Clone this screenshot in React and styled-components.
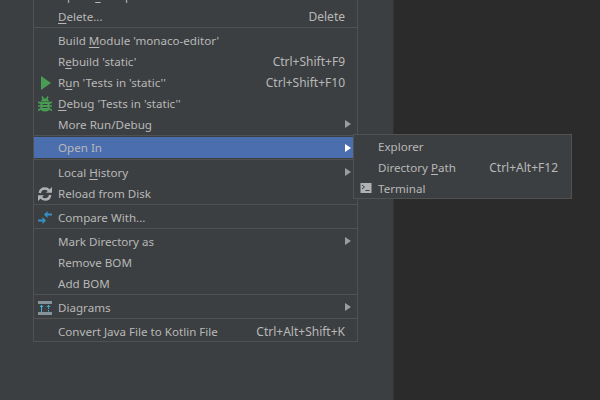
import styled, { createGlobalStyle } from "styled-components";

const GlobalStyle = createGlobalStyle`
  html, body {
    margin: 0;
    padding: 0;
    overflow: hidden;
    background: #3c3f41;
  }
`;

const Page = styled.div`
  display: flex;
  width: 600px;
  height: 400px;
  overflow: hidden;
  font-family: "Noto Sans", "Liberation Sans", sans-serif;
  font-size: 11.6px;
  color: #b8b8b8;
`;

const Side = styled.div`
  width: 393px;
  flex: none;
  background: #3c3f41;
`;

const Editor = styled.div`
  flex: 1;
  background: #2b2b2b;
  border-left: 1px solid #323232;
`;

const Menu = styled.div`
  width: 323px;
  margin: -16px 0 0 33px;
  background: #3c3f41;
  border: 1px solid #515151;
`;

const Row = styled.div`
  position: relative;
  display: flex;
  align-items: center;
  height: ${({ $last }) => ($last ? 20 : 21)}px;
  padding: 0 6px 0 4px;
  white-space: nowrap;
  background: ${({ $active }) => ($active ? "#4b6eaf" : "transparent")};
`;

const IconSlot = styled.span`
  display: flex;
  align-items: center;
  flex: none;
  width: 20px;
  height: 16px;
`;

const Label = styled.span`
  margin-top: ${({ $lift }) => ($lift ? 2 : 1)}px;
  line-height: 16px;
`;

const Mnemonic = styled.u`
  text-underline-offset: 2px;
`;

const Shortcut = styled.span`
  margin: ${({ $lift }) => ($lift ? 2 : 1)}px 6px 0 auto;
  font-size: 12px;
  line-height: 16px;
`;

const Arrow = styled.span`
  margin: 0 0 ${({ $active }) => ($active ? 0 : 2)}px auto;
  width: 0;
  height: 0;
  border-style: solid;
  border-width: 4.5px 0 4.5px 6px;
  border-color: transparent transparent transparent ${({ $active }) => ($active ? "#ffffff" : "#9a9c9e")};
`;

const Separator = styled.div`
  height: 1px;
  margin-top: ${({ $before }) => $before || 0}px;
  margin-bottom: ${({ $after }) => ($after === undefined ? 2 : $after)}px;
  background: #515151;
`;

const SubMenu = styled.div`
  position: absolute;
  left: 319px;
  top: -3px;
  width: 217px;
  padding-top: 1px;
  background: #3c3f41;
  border: 1px solid #515151;
`;

const SubRow = styled(Row)`
  padding: 0 7px 0 6px;
`;

const SubIconSlot = styled(IconSlot)`
  width: 18px;
`;

const RunIcon = () => (
  <svg width="14" height="16" viewBox="0 0 14 16">
    <path d="M3 1 L13 8 L3 15 Z" fill="#499c54" />
  </svg>
);

const BugIcon = () => (
  <svg width="14" height="16" viewBox="0 0 14 16">
    <g stroke="#499c54" strokeWidth="1.6" fill="none">
      <path d="M0 6 L3 7.5 M0 10 H3 M0 14.5 L3 12.5 M14 6 L11 7.5 M14 10 H11 M14 14.5 L11 12.5" />
      <path d="M4 0.5 L5.5 3 M10 0.5 L8.5 3" />
    </g>
    <path d="M4.5 2.5 H9.5 L11 5 H3 Z" fill="#499c54" />
    <path d="M2.5 5.5 H11.5 V12 Q11.5 15.5 7 15.5 Q2.5 15.5 2.5 12 Z" fill="#499c54" />
    <path d="M4.5 8.5 H9.5 M4.5 11.5 H9.5" stroke="#3c3f41" strokeWidth="1.2" />
  </svg>
);

const ReloadIcon = () => (
  <svg width="14" height="16" viewBox="0 0 14 16">
    <g fill="none" stroke="#afb1b3" strokeWidth="2.4">
      <path d="M1.8 7 Q2.5 2.5 7 2.5 Q9.5 2.5 11 4.5" />
      <path d="M12.2 9 Q11.5 13.5 7 13.5 Q4.5 13.5 3 11.5" />
    </g>
    <path d="M8 6.8 H14 V1 Z M6 9.2 H0 V15 Z" fill="#afb1b3" />
  </svg>
);

const CompareIcon = () => (
  <svg width="14" height="16" viewBox="0 0 14 16">
    <g fill="#3592c4">
      <path d="M6 4.5 L9.5 1 V3.5 H14 V5.5 H9.5 V8 Z" />
      <path d="M8 10.5 L4.5 7 V9.5 H0 V11.5 H4.5 V14 Z" />
    </g>
  </svg>
);

const DiagramIcon = () => (
  <svg width="14" height="16" viewBox="0 0 14 16">
    <rect x="0" y="1" width="14" height="3" fill="#87939a" />
    <rect x="0" y="12" width="14" height="3" fill="#87939a" />
    <path d="M3.5 5 V12" stroke="#40b6e0" strokeWidth="1" />
    <path d="M1.5 7 L3.5 5 L5.5 7 Z" fill="#40b6e0" />
    <path d="M10.5 5 V12" stroke="#40b6e0" strokeWidth="1" strokeDasharray="1.5 1" />
    <path d="M8.5 7 L10.5 5 L12.5 7 Z" fill="#40b6e0" />
  </svg>
);

const TerminalIcon = () => (
  <svg width="12" height="12" viewBox="0 0 12 12">
    <rect x="0.5" y="1" width="11" height="10" fill="#afb1b3" />
    <path d="M2 3 L4.5 5 L2 7" fill="none" stroke="#3c3f41" strokeWidth="1" />
    <path d="M5.5 8.5 H9.5" stroke="#3c3f41" strokeWidth="1" />
  </svg>
);

const Item = ({ icon, children, shortcut, submenu, last }) => (
  <Row $last={last}>
    <IconSlot>{icon}</IconSlot>
    <Label $lift={last}>{children}</Label>
    {shortcut && <Shortcut $lift={last}>{shortcut}</Shortcut>}
    {submenu && <Arrow />}
  </Row>
);

const SubItem = ({ icon, children, shortcut, last }) => (
  <SubRow $last={last}>
    <SubIconSlot>{icon}</SubIconSlot>
    <Label $lift={last}>{children}</Label>
    {shortcut && <Shortcut $lift={last}>{shortcut}</Shortcut>}
  </SubRow>
);

export default function App() {
  return (
    <Page>
      <GlobalStyle />
      <Side>
        <Menu>
          <Item shortcut="Ctrl+Alt+O">Optimi<Mnemonic>z</Mnemonic>e Imports</Item>
          <Item shortcut="Delete"><Mnemonic>D</Mnemonic>elete...</Item>
          <Separator />
          <Item>Build <Mnemonic>M</Mnemonic>odule 'monaco-editor'</Item>
          <Item shortcut="Ctrl+Shift+F9">R<Mnemonic>e</Mnemonic>build 'static'</Item>
          <Item icon={<RunIcon />} shortcut="Ctrl+Shift+F10">R<Mnemonic>u</Mnemonic>n 'Tests in 'static''</Item>
          <Item icon={<BugIcon />}><Mnemonic>D</Mnemonic>ebug 'Tests in 'static''</Item>
          <Item submenu>More Run/Debug</Item>
          <Separator $after={1} />
          <Row $active>
            <IconSlot />
            <Label>Open In</Label>
            <Arrow $active />
            <SubMenu>
              <SubItem>Explorer</SubItem>
              <SubItem shortcut="Ctrl+Alt+F12">Directory <Mnemonic>P</Mnemonic>ath</SubItem>
              <SubItem icon={<TerminalIcon />} last>Terminal</SubItem>
            </SubMenu>
          </Row>
          <Separator $before={1} />
          <Item submenu>Local <Mnemonic>H</Mnemonic>istory</Item>
          <Item icon={<ReloadIcon />}>Reload from Disk</Item>
          <Separator />
          <Item icon={<CompareIcon />}>Compare With...</Item>
          <Separator />
          <Item submenu>Mark Directory as</Item>
          <Item>Remove BOM</Item>
          <Item>Add BOM</Item>
          <Separator />
          <Item icon={<DiagramIcon />} submenu>Diagrams</Item>
          <Separator />
          <Item shortcut="Ctrl+Alt+Shift+K" last>Convert Java File to Kotlin File</Item>
        </Menu>
      </Side>
      <Editor />
    </Page>
  );
}
